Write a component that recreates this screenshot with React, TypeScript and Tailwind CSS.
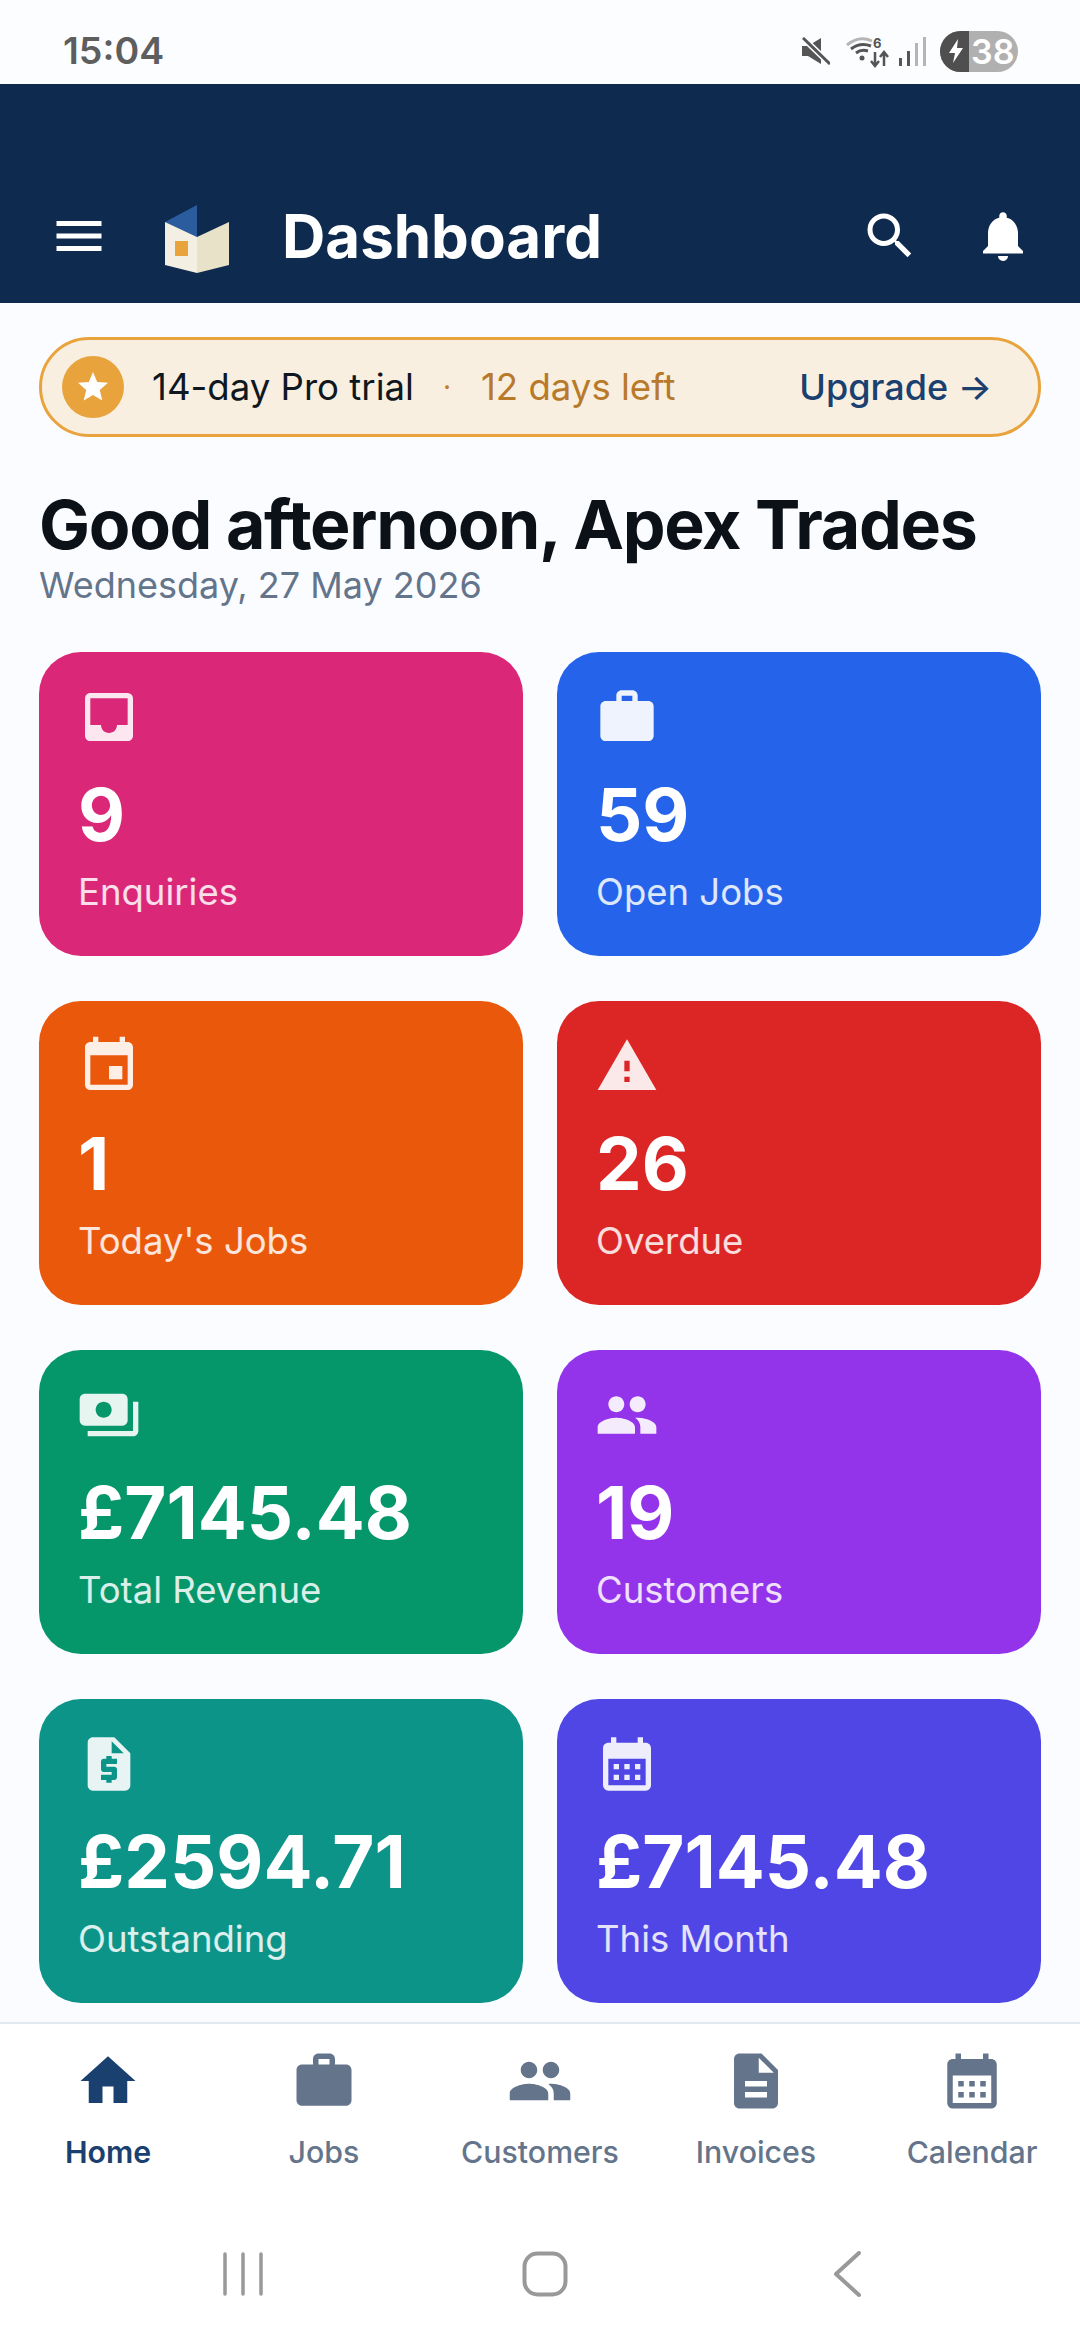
import React from 'react';
import {
  MdMenu, MdSearch, MdNotifications, MdStar, MdInbox, MdWork, MdEvent, MdWarning, MdPayments,
  MdPeople, MdRequestQuote, MdCalendarMonth, MdHome, MdDescription,
} from 'react-icons/md';
import type { IconType } from 'react-icons';

type Stat = { Icon: IconType; value: string; label: string; bg: string; iconColor: string };

const stats: Stat[] = [
  { Icon: MdInbox, value: '9', label: 'Enquiries', bg: 'bg-[#db2777]', iconColor: 'text-[#fce7f1]' },
  { Icon: MdWork, value: '59', label: 'Open Jobs', bg: 'bg-[#2563eb]', iconColor: 'text-[#eef3fe]' },
  { Icon: MdEvent, value: '1', label: "Today's Jobs", bg: 'bg-[#ea580c]', iconColor: 'text-[#fdeee6]' },
  { Icon: MdWarning, value: '26', label: 'Overdue', bg: 'bg-[#dc2626]', iconColor: 'text-[#fbe9e9]' },
  { Icon: MdPayments, value: '£7145.48', label: 'Total Revenue', bg: 'bg-[#059669]', iconColor: 'text-[#e6f5f0]' },
  { Icon: MdPeople, value: '19', label: 'Customers', bg: 'bg-[#9333ea]', iconColor: 'text-[#f4ebfd]' },
  { Icon: MdRequestQuote, value: '£2594.71', label: 'Outstanding', bg: 'bg-[#0d9488]', iconColor: 'text-[#e7f4f3]' },
  { Icon: MdCalendarMonth, value: '£7145.48', label: 'This Month', bg: 'bg-[#4f46e5]', iconColor: 'text-[#eeedfc]' },
];

const tabs: { Icon: IconType; label: string; active?: boolean }[] = [
  { Icon: MdHome, label: 'Home', active: true },
  { Icon: MdWork, label: 'Jobs' },
  { Icon: MdPeople, label: 'Customers' },
  { Icon: MdDescription, label: 'Invoices' },
  { Icon: MdCalendarMonth, label: 'Calendar' },
];

const StatCard: React.FC<Stat> = ({ Icon, value, label, bg, iconColor }) => (
  <div className={`${bg} h-[304px] rounded-[42px] px-[39px] pt-[33px] flex flex-col`}>
    <Icon className={`${iconColor} w-[64px] h-[64px] -ml-[1px] shrink-0`} />
    <div className="mt-[22px] text-[72.5px] leading-[88px] font-bold text-white">{value}</div>
    <div className="mt-[11px] text-[36.5px] leading-[44px] text-white/85">{label}</div>
  </div>
);

const Logo = () => (
  <svg width="64" height="68" viewBox="0 0 64 68">
    <path d="M0 17 L32 0 V32 Z" fill="#2b5c9e" />
    <path d="M0 17 L32 32 V68 L0 60 Z" fill="#f4efe3" />
    <path d="M32 32 L64 17 V60 L32 68 Z" fill="#e8e2c9" />
    <rect x="10" y="36" width="13" height="15" fill="#e8a33d" />
  </svg>
);

export default function App() {
  return (
    <div className="w-[1080px] h-[2340px] bg-[#fafcff] flex flex-col overflow-hidden" style={{ fontFamily: 'Inter, sans-serif' }}>
      {/* status bar */}
      <div className="h-[84px] shrink-0 flex items-center justify-between pl-[63px] pr-[62px] pt-[18px] bg-[#fcfdff]">
        <span className="text-[37.5px] font-semibold text-[#5e5e5e]">15:04</span>
        <div className="flex items-center">
          {/* muted */}
          <svg width="28" height="28" viewBox="0 0 28 28">
            <path d="M0 9 H6 L19 1 V27 L6 19 H0 Z" fill="#555555" />
            <path d="M1 1 L28 27" stroke="#fcfdff" strokeWidth="6" />
            <path d="M1 1 L28 27" stroke="#555555" strokeWidth="3" />
          </svg>
          {/* wifi + data */}
          <svg width="46" height="37" viewBox="0 -3 46 37" className="ml-[16px] -mr-[2px]">
            <path d="M1 9 Q13 -1 26 5" fill="none" stroke="#b5b5b5" strokeWidth="3" />
            <path d="M5 13 Q14 6 25 10" fill="none" stroke="#555555" strokeWidth="3" />
            <path d="M10 17 Q15 13 22 15" fill="none" stroke="#555555" strokeWidth="3" />
            <circle cx="16" cy="22" r="2.5" fill="#555555" />
            <text x="27" y="12" fontSize="13" fontWeight="700" fill="#555555">6</text>
            <path d="M29 16 V29 M25 25 L29 30 L33 25 M38 30 V17 M34 21 L38 16 L42 21" fill="none" stroke="#555555" strokeWidth="2.5" />
          </svg>
          {/* signal */}
          <svg width="27" height="29" viewBox="0 0 27 29" className="ml-[9px]">
            <rect x="0" y="21" width="3" height="8" fill="#555555" />
            <rect x="8" y="14" width="3" height="15" fill="#555555" />
            <rect x="16" y="6" width="3" height="23" fill="#b5b5b5" />
            <rect x="24" y="0" width="3" height="29" fill="#b5b5b5" />
          </svg>
          {/* battery */}
          <div className="ml-[14px] w-[78px] h-[41px] rounded-full overflow-hidden flex bg-[#b0b0b0]">
            <div className="w-[29px] bg-[#4f4f4f] flex items-center justify-center pl-[3px]">
              <svg width="14" height="24" viewBox="0 0 14 24"><path d="M9 0 L0 14 H6 L4 24 L14 9 H8 Z" fill="#fff" /></svg>
            </div>
            <span className="text-[34px] leading-[41px] font-semibold text-white pl-[2px]">38</span>
          </div>
        </div>
      </div>

      {/* header */}
      <div className="h-[219px] shrink-0 bg-[#0e2a4e] flex items-end pb-[31px] pl-[50px] pr-[47px]">
        <div className="flex items-center w-full h-[72px]">
          <MdMenu className="w-[60px] h-[60px] text-white -ml-[1px]" />
          <div className="ml-[56px] mt-[6px]"><Logo /></div>
          <h1 className="ml-[53px] text-[60px] font-bold text-white leading-[72px]">Dashboard</h1>
          <div className="ml-auto flex items-center gap-[53px]">
            <MdSearch className="w-[60px] h-[60px] text-white" />
            <MdNotifications className="w-[60px] h-[60px] text-white" />
          </div>
        </div>
      </div>

      {/* trial banner */}
      <div className="mx-[39px] mt-[34px] h-[100px] rounded-full border-[3px] border-[#e8a33d] bg-[#f9efe0] flex items-center pl-[20px] pr-[46px] shrink-0">
        <div className="w-[62px] h-[62px] rounded-full bg-[#e8a33d] flex items-center justify-center">
          <MdStar className="w-[36px] h-[36px] text-white" />
        </div>
        <span className="ml-[28px] text-[36.6px] text-[#0f1720]">14-day Pro trial</span>
        <span className="ml-[29px] text-[28px] text-[#c27c2c]">·</span>
        <span className="ml-[30px] text-[36.6px] text-[#b87a2a]">12 days left</span>
        <span className="ml-auto text-[36px] font-medium text-[#1a4070]">Upgrade →</span>
      </div>

      {/* greeting */}
      <div className="mx-[39px] mt-[47px] shrink-0">
        <h2 className="text-[68px] leading-[80px] font-bold tracking-[-1.3px] text-[#0c1118]">Good afternoon, Apex Trades</h2>
        <p className="text-[36px] leading-[44px] text-[#64748b] -mt-[1px]">Wednesday, 27 May 2026</p>
      </div>

      {/* stats */}
      <div className="mx-[39px] mt-[45px] grid grid-cols-2 gap-x-[34px] gap-y-[45px] shrink-0">
        {stats.map((s) => (
          <StatCard key={s.label} {...s} />
        ))}
      </div>

      {/* bottom tabs */}
      <div className="mt-[19px] h-[198px] shrink-0 bg-white border-t-[2px] border-[#e2e8f0] flex">
        {tabs.map(({ Icon, label, active }) => (
          <div key={label} className="flex-1 flex flex-col items-center pt-[24px]">
            <Icon className={`w-[66px] h-[66px] ${active ? 'text-[#1a4070]' : 'text-[#64748b]'}`} />
            <span className={`mt-[19px] text-[30.3px] leading-[38px] ${active ? 'font-semibold text-[#1a4070]' : 'font-medium text-[#64748b]'}`}>{label}</span>
          </div>
        ))}
      </div>

      {/* system nav */}
      <div className="flex-1 bg-white">
        <div className="ml-[92px] w-[906px] mt-[31px] grid grid-cols-3 justify-items-center items-center">
          <svg width="42" height="44" viewBox="0 0 42 44"><path d="M3 2 V42 M21 2 V42 M39 2 V42" stroke="#999999" strokeWidth="3.5" strokeLinecap="round" /></svg>
          <svg width="46" height="46" viewBox="0 0 46 46"><rect x="2.5" y="2.5" width="41" height="41" rx="13" fill="none" stroke="#999999" strokeWidth="4" /></svg>
          <svg width="28" height="46" viewBox="0 0 28 46"><path d="M26 2 L3 23 L26 44" fill="none" stroke="#999999" strokeWidth="4" strokeLinecap="round" strokeLinejoin="round" /></svg>
        </div>
      </div>
    </div>
  );
}
